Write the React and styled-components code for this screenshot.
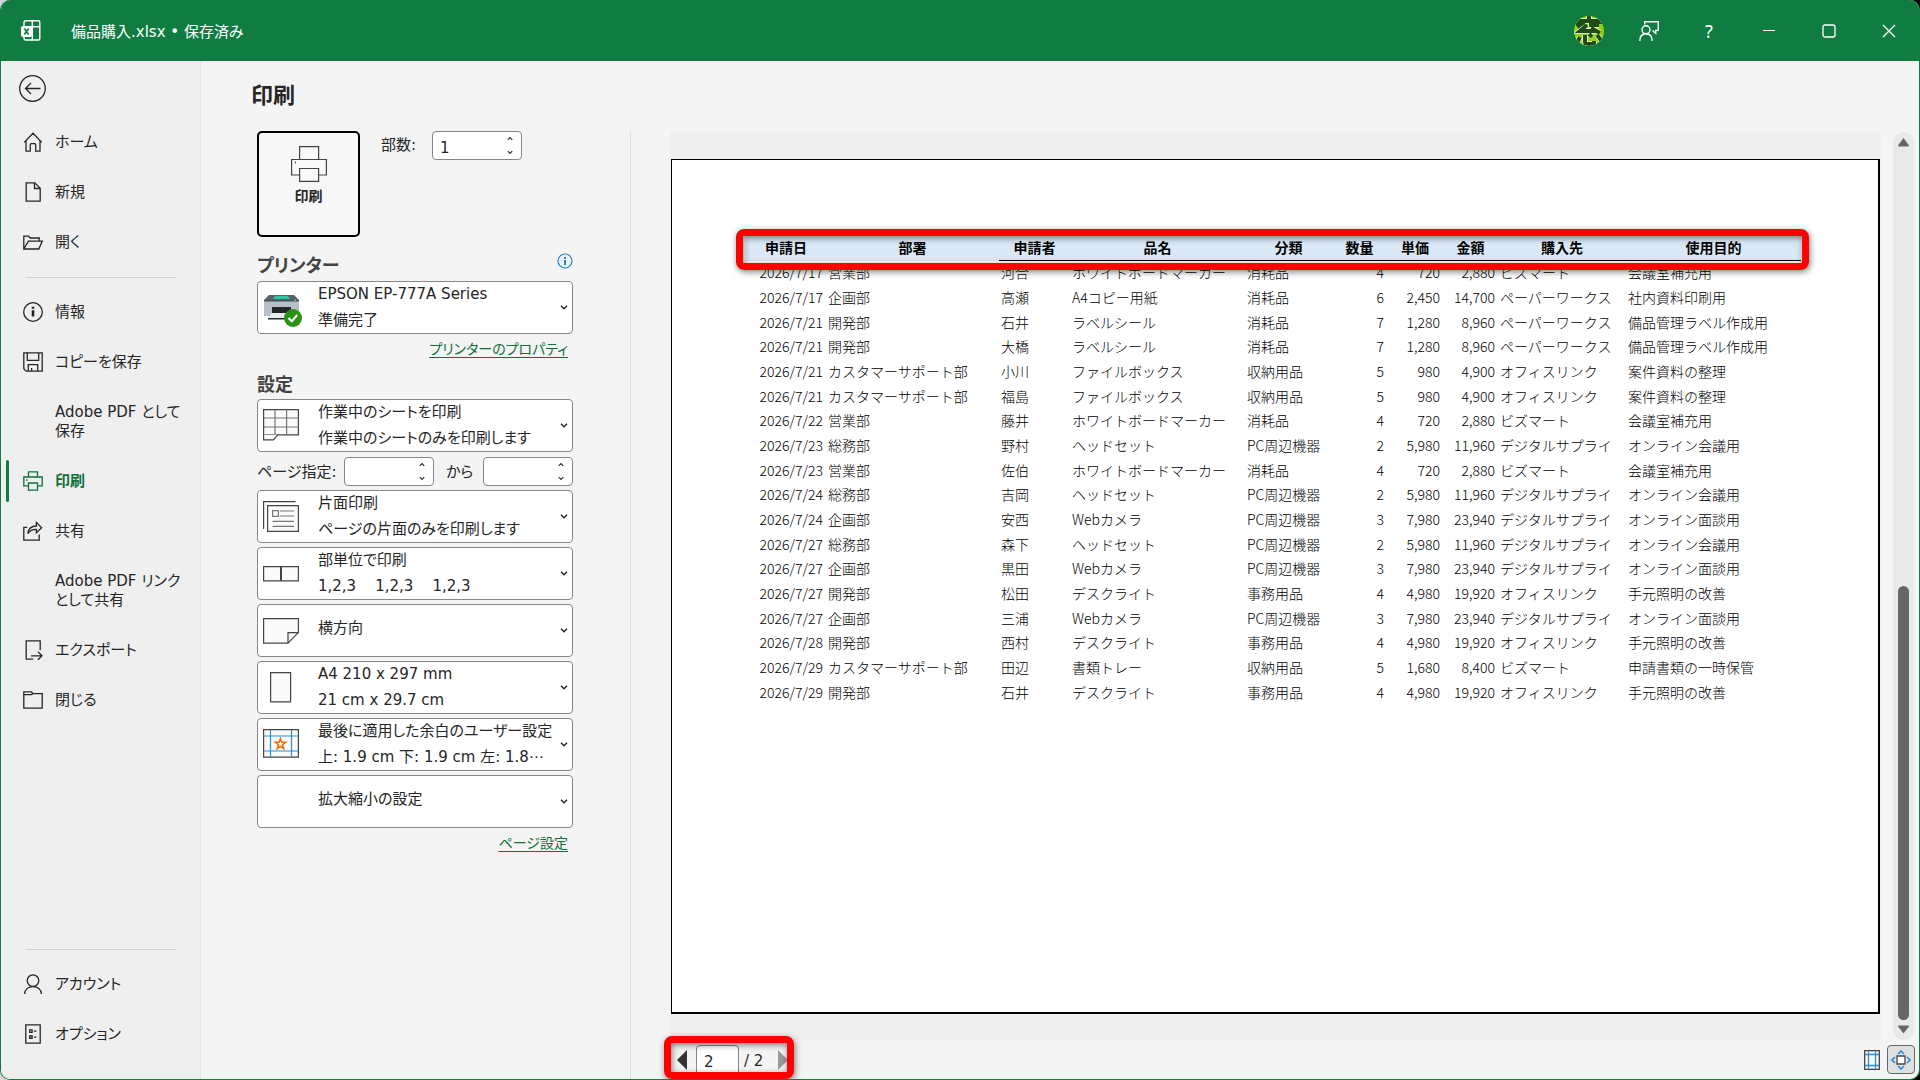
import React from 'react'
import styled, { createGlobalStyle } from 'styled-components'

const GlobalStyle = createGlobalStyle`
  *, *::before, *::after {
    box-sizing: border-box;
  }

  body {
    margin: 0;
    background: linear-gradient(90deg, #d6d6d6 50%, #000000 50%);
    color: #262626;
    font-family: 'DejaVu Sans', 'Noto Sans CJK JP', sans-serif;
    font-feature-settings: 'palt';
    font-size: 15px;
  }

  button, input, select {
    font: inherit;
    font-feature-settings: inherit;
    color: inherit;
  }

  svg {
    display: block;
    flex: none;
  }
`

const Window = styled.div`
  min-height: 100vh;
  display: flex;
  flex-direction: column;
  background: #f4f4f4;
  border: 1px solid #107c41;
  border-top: none;
  border-radius: 10px;
  overflow: hidden;
`

const TitleBar = styled.header`
  height: 61px;
  display: flex;
  align-items: center;
  gap: 30px;
  padding-left: 20px;
  background: #107c41;
  color: #ffffff;
`

const FileName = styled.div`
  flex: 1;
`

const TitleActions = styled.div`
  display: flex;
`

const TitleButton = styled.button`
  width: 60px;
  height: 61px;
  display: flex;
  align-items: center;
  justify-content: center;
  padding: 0;
  border: none;
  background: transparent;
  font-family: 'Noto Sans', sans-serif;
  font-size: 18px;
`

const Body = styled.div`
  flex: 1;
  display: flex;
`

const Sidebar = styled.nav`
  width: 200px;
  flex: none;
  display: flex;
  flex-direction: column;
  padding-bottom: 20px;
  background: #efefef;
  border-right: 1px solid #e6e6e6;
`

const BackButton = styled.button`
  width: 62px;
  height: 56px;
  padding: 0 0 2px 18px;
  border: none;
  background: transparent;
`

const NavItem = styled.a`
  height: ${props => (props.$tall ? 69 : 50)}px;
  display: flex;
  align-items: center;
  gap: 12px;
  padding: 0 10px 0 5px;
  color: ${props => (props.$active ? '#0f703b' : '#262626')};
  font-weight: ${props => (props.$active ? 700 : 400)};
  line-height: 19px;
  text-decoration: none;

  &::before {
    content: '';
    width: 3px;
    height: 42px;
    margin-right: -6px;
    border-radius: 2px;
    background: ${props => (props.$active ? '#107c41' : 'transparent')};
  }
`

const IconSlot = styled.span`
  width: 20px;
  flex: none;
  margin-left: 8px;
`

const NavDivider = styled.hr`
  width: 150px;
  margin: ${props => (props.$bottom ? 'auto 0 9px 25px' : '10px 0 9px 25px')};
  border: none;
  border-top: 1px solid #cfcfcf;
`

const Content = styled.main`
  flex: 1;
  min-width: 0;
  display: flex;
  flex-direction: column;
`

const PageTitle = styled.h1`
  margin: 0;
  padding-left: 50px;
  font-size: 22px;
  line-height: 70px;
`

const Columns = styled.div`
  flex: 1;
  display: flex;
`

const Settings = styled.section`
  width: 430px;
  flex: none;
  padding: 0 57px 0 56px;
  border-right: 1px solid #dfdfdf;
`

const PrintRow = styled.div`
  display: flex;
  align-items: flex-start;
`

const PrintButton = styled.button`
  width: 103px;
  height: 106px;
  display: flex;
  flex-direction: column;
  align-items: center;
  gap: 3px;
  margin-right: 21px;
  padding: 13px 0 0;
  border: 2px solid #000000;
  border-radius: 5px;
  background: #f7f7f7;
  font-size: 14px;
  font-weight: 700;
  line-height: 22px;
`

const FieldLabel = styled.label`
  width: ${props => props.$width}px;
  padding-left: ${props => props.$indent || 0}px;
  line-height: 28px;
  white-space: nowrap;
`

const SpinnerBox = styled.span`
  width: 90px;
  height: 29px;
  display: flex;
  border: 1px solid #868686;
  border-radius: 4px;
  background: #ffffff;
  overflow: hidden;
`

const SpinnerInput = styled.input`
  width: 67px;
  padding: 4px 0 0 7px;
  border: none;
  outline: none;
  background: transparent;
`

const SpinnerButtons = styled.span`
  display: flex;
  flex-direction: column;
`

const SpinnerButton = styled.button`
  width: 21px;
  flex: 1;
  display: flex;
  align-items: center;
  padding: 0 0 0 7px;
  border: none;
  background: transparent;
`

const SectionHead = styled.div`
  display: flex;
  align-items: center;
  justify-content: space-between;
  height: ${props => props.$height}px;
  padding-top: ${props => props.$top}px;
`

const SectionTitle = styled.h2`
  margin: 0;
  color: #444444;
  font-size: 18px;
  line-height: 24px;
`

const InfoButton = styled.button`
  padding: 0 0 10px;
  border: none;
  background: transparent;
`

const Dropdown = styled.div`
  height: 53px;
  display: flex;
  align-items: center;
  margin-bottom: 4px;
  padding-right: 4px;
  border: 1px solid #868686;
  border-radius: 4px;
  background: #ffffff;
`

const DropdownIcon = styled.span`
  width: 60px;
  padding-left: 5px;
`

const DropdownText = styled.div`
  flex: 1;
  min-width: 0;
  padding-bottom: ${props => (props.$single ? 6 : 1)}px;
  line-height: 26px;
  white-space: pre;
`

const Select = styled.select`
  appearance: none;
  display: block;
  width: 100%;
  height: 26px;
  padding: 0;
  border: none;
  outline: none;
  background: transparent;
  line-height: 26px;
`

const PageRange = styled.div`
  display: flex;
  align-items: center;
  margin: 5px 0 4px;
`

const LinkRow = styled.div`
  padding-right: 5px;
  font-size: 14px;
  line-height: 22px;
  text-align: right;
`

const GreenLink = styled.a`
  color: #0f703b;
  text-underline-offset: 3px;
`

const Preview = styled.section`
  flex: 1;
  min-width: 0;
  display: flex;
  flex-direction: column;
  padding: 1px 4px 0 39px;
`

const Stage = styled.div`
  flex: 1;
  display: flex;
  gap: 12px;
  padding-right: 1px;
`

const Canvas = styled.div`
  flex: 1;
  min-width: 0;
  display: flex;
  padding: 27px 1px 26px;
  background: #efefef;
`

const Paper = styled.div`
  flex: 1;
  min-width: 0;
  padding: 75px 77px 0 74px;
  border: solid #000000;
  border-width: 1px 2px 2px 1px;
  background: #ffffff;
`

const TableWrap = styled.div`
  position: relative;
`

const Sheet = styled.table`
  width: 100%;
  height: 470px;
  table-layout: fixed;
  border-spacing: 0;
  color: #000000;
  font-family: 'Noto Sans CJK JP', sans-serif;
  font-feature-settings: normal;
  font-size: 14px;
  font-weight: 300;
  line-height: 20px;
  white-space: nowrap;
`

const HeadCell = styled.th`
  height: 26px;
  padding: 0 0 2px;
  border-bottom: 1px solid ${props => (props.$ruled ? '#000000' : '#dae8f6')};
  background: #dae8f6;
`

const Cell = styled.td`
  padding: 0 3px 2px 2px;
  text-align: ${props => props.$align || 'left'};
`

const Highlight = styled.div`
  position: absolute;
  top: ${props => props.$top}px;
  left: ${props => props.$left}px;
  right: ${props => props.$right}px;
  height: ${props => props.$height}px;
  border: 7px solid #ff0000;
  border-radius: 8px;
  box-shadow: 1px 2px 6px rgba(0, 0, 0, 0.5), inset 1px 2px 6px rgba(0, 0, 0, 0.5);
  pointer-events: none;
`

const Scrollbar = styled.div`
  width: 21px;
  display: flex;
  flex-direction: column;
  align-items: center;
  padding: 6px 0;
  border-radius: 11px;
  background: #e9e9e9;
`

const ScrollTrack = styled.div`
  flex: 1;
  width: 11px;
  display: flex;
  flex-direction: column;
  justify-content: flex-end;
  padding: 4px 0 5px;
`

const ScrollThumb = styled.div`
  height: 50%;
  border-radius: 6px;
  background: #666666;
`

const PreviewFooter = styled.div`
  height: 39px;
  display: flex;
  justify-content: space-between;
  padding: 5px 0 0;
`

const Pager = styled.div`
  position: relative;
  width: 120px;
  height: 34px;
  display: flex;
  align-items: flex-start;
  gap: 5px;
  padding-left: 7px;
  line-height: 32px;
`

const PagerButton = styled.button`
  padding: 5px 0 0;
  border: none;
  background: transparent;
`

const PagerInput = styled.input`
  width: 43px;
  height: 32px;
  margin-left: 4px;
  padding: 2px 0 0 7px;
  border: 1px solid #868686;
  border-radius: 4px;
  background: #ffffff;
`

const PagerTotal = styled.span`
  width: 29px;
`

const ViewButtons = styled.div`
  display: flex;
  gap: 1px;
`

const ViewButton = styled.button`
  width: 28px;
  height: 29px;
  display: flex;
  align-items: center;
  justify-content: center;
  padding: 0;
  border: 1px solid ${props => (props.$on ? '#666666' : 'transparent')};
  border-radius: 4px;
  background: ${props => (props.$on ? '#e0e0e0' : 'transparent')};
`

const Icon = ({ size = 20, children }) => (
  <svg width={size} height={size} viewBox={`0 0 ${size} ${size}`} fill="none" stroke="currentColor" strokeWidth="1.3">
    {children}
  </svg>
)

const navIcons = {
  home: <path d="M1.2 10.4 10 1.2l8.8 9.2M3 8.8v10.3h4.3v-6.4q0-1 1-1h3.4q1 0 1 1v6.4H17V8.8M7.3 19.1h.2" />,
  blank: <path d="M3.2.8h8.6l5.4 5.4v13H3.2zM11.5 1v5.5H17" />,
  open: <path d="M.8 17V4.2h4.7l1.8 1.8h8.9v3.2M.8 17l4.6-7.8h13.8L15.8 17z" />,
  info: (
    <>
      <circle cx="10" cy="10" r="9.3" />
      <path d="M10 8.3v6.2M10 4.8v2" strokeWidth="2.6" />
    </>
  ),
  save: <path d="M.8.8h18.4v18.4H3.2L.8 16.8zM4.3 1v7.4h11.4V1M5.3 19v-6.3h9.4V19M8.6 19v-3" />,
  print: (
    <>
      <path d="M5.5 6V.9h9V6M5.2 14.8H.8V6h18.4v8.8h-4.4M5.5 12h9v7.1h-9z" />
      <path d="M3 9h1.5" />
    </>
  ),
  share: <path d="M4.3 6.3H.8v12.9h15.4v-5.8M4.8 12.5C5.5 7.6 8.5 5 13.4 5V1.4l5.2 5.3-5.2 5V8.4C9.6 8.3 7 9.5 4.8 12.5z" />,
  export: <path d="M10.3 19.2H3.2V.8h14V10M8 15.8h11M14.8 11.6l4.2 4.2-4.2 4.2" />,
  close: <path d="M.8 18.2V1.8h7.8l1.2 1.8h9.4v14.6zM.8 4.6h7.6l1.4-1" />,
  account: (
    <>
      <circle cx="10" cy="6.6" r="5.8" />
      <path d="M1.5 20c.5-4.5 4-7.4 8.5-7.4s8 2.9 8.5 7.4" />
    </>
  ),
  options: (
    <>
      <path d="M2.8.8h14.4v18.4H2.8z" />
      <path d="M6.7 5.9h2.4v2.4H6.7zM6.7 12h2.4v2.4H6.7zM11 7.1h2.4M11 13.2h2.4" />
    </>
  )
}

const mainNav = [
  { icon: 'home', label: 'ホーム' },
  { icon: 'blank', label: '新規' },
  { icon: 'open', label: '開く' },
  { divider: true },
  { icon: 'info', label: '情報' },
  { icon: 'save', label: 'コピーを保存' },
  { label: <>Adobe PDF として<br />保存</>, tall: true },
  { icon: 'print', label: '印刷', active: true },
  { icon: 'share', label: '共有' },
  { label: <>Adobe PDF リンク<br />として共有</>, tall: true },
  { icon: 'export', label: 'エクスポート' },
  { icon: 'close', label: '閉じる' }
]

const footerNav = [
  { icon: 'account', label: 'アカウント' },
  { icon: 'options', label: 'オプション' }
]

const NavLink = ({ item }) => (
  <NavItem href="#" $tall={item.tall} $active={item.active} aria-current={item.active ? 'page' : undefined}>
    <IconSlot>{item.icon && <Icon>{navIcons[item.icon]}</Icon>}</IconSlot>
    <span>{item.label}</span>
  </NavItem>
)

const ExcelLogo = () => (
  <svg width="20" height="21" viewBox="0 0 20 21" fill="none" stroke="#fff" strokeWidth="1.4">
    <path d="M3 6V2.7q0-2 2-2h12.3q1.5 0 1.5 1.5v16.3q0 1.5-1.5 1.5H5q-2 0-2-2V17M3 6.8h16M11.3 1v19" />
    <rect x="0" y="6" width="11" height="11" rx="2" fill="#fff" stroke="none" />
    <path d="m3.3 8.6 4.4 6M7.7 8.6l-4.4 6" stroke="#107c41" strokeWidth="1.7" />
  </svg>
)

const Avatar = () => (
  <svg width="30" height="30" viewBox="0 0 30 30" fill="none">
    <clipPath id="avatar"><circle cx="15" cy="15" r="15" /></clipPath>
    <g clipPath="url(#avatar)">
      <rect width="30" height="30" fill="#8fd014" />
      {['#f2f7e6', '#1f4d16'].map((color, i) => (
        <path
          key={color}
          d="M15 0v4M3 9V5h23v3M10 6 3 11M17 6v3h8M13 9l-7 6h15M17 12l9 5M6 21l-3 6M11 19v7q0 2 3 2h6v-3M15 18l3 3M23 19l4 5"
          stroke={color}
          strokeWidth={i === 0 ? 5.6 : 4}
        />
      ))}
    </g>
  </svg>
)

const FeedbackIcon = () => (
  <svg width="20" height="20" viewBox="0 0 20 20" fill="none" stroke="#fff" strokeWidth="1.4">
    <path d="M5.7 3.5V.8h13.5v8.6h-2.4v3l-3.3-3" />
    <circle cx="7" cy="8.8" r="4" />
    <path d="M.8 20c0-4.5 2.5-7.2 6.2-7.2s6.2 2.7 6.2 7.2" />
  </svg>
)

const Chevron = ({ up, size = 8 }) => (
  <svg width={size} height="5" viewBox="0 0 8 5" fill="none" stroke="#262626" strokeWidth="1.5">
    <path d={up ? 'M1 4.2 4 1.2l3 3' : 'M1 .8l3 3 3-3'} />
  </svg>
)

const BigPrinterIcon = () => (
  <svg width="36" height="36" viewBox="0 0 36 36" fill="#fafafa" stroke="#444" strokeWidth="1.2">
    <path d="M8.6 14V.6h19V14M8.6 29H.6V13.5h34.8V29h-8M8.6 22.5h19v12.9h-19z" />
    <path d="M4 16.5h1" strokeWidth="2" />
  </svg>
)

const PrinterPhoto = () => (
  <svg width="40" height="40" viewBox="0 -6 40 40">
    <path d="M6 1h25l5 5v2H1V6z" fill="#58626b" />
    <path d="M12 2h13l2 3H10z" fill="#25c7a5" />
    <path d="M1 7h35v15H1z" fill="#b7c0ca" />
    <path d="M1 6h35v1.5H1z" fill="#46505a" />
    <path d="M9 13h19v7H9z" fill="#23272c" />
    <path d="M9 19h16v5H5z" fill="#e8ecf0" />
    <path d="M5 24h20v1.5H5z" fill="#23272c" />
    <path d="M31 5.5h2v1.5h-2z" fill="#2be04a" />
    <circle cx="30" cy="24" r="9" fill="#2c9113" />
    <path d="m25.5 24 3.3 3.2 5.4-6.2" fill="none" stroke="#fff" strokeWidth="2" />
  </svg>
)

const SheetIcon = () => (
  <svg width="36" height="36" viewBox="0 0 36 36" fill="#fafafa" stroke="#444" strokeWidth="1.2">
    <path d="M.6 1.6h34.8v25.2H.6z" />
    <path d="M.6 10h34.8M.6 19h34.8M12 1.6v25M23.6 1.6v25" stroke="#777" />
    <path d="M.6 26.8v5h9.8l4.4-5" />
  </svg>
)

const OneSidedIcon = () => (
  <svg width="36" height="32" viewBox="0 0 36 32" fill="#fafafa" stroke="#444" strokeWidth="1.2">
    <path d="M.6 28V.6h32" fill="none" />
    <path d="M4.6 4.6h30.8v25.8H4.6z" />
    <path d="M9.6 9.6h5.8v5.8H9.6zM17 10h14M17 15h14M9.6 20.3H31M9.6 25.3H31" stroke="#777" />
  </svg>
)

const CollateIcon = () => (
  <svg width="36" height="16" viewBox="0 0 36 16" fill="#fafafa" stroke="#444" strokeWidth="1.2">
    <path d="M.6.6h34.8v14.2H.6z" />
    <path d="M18 .6v14.2" strokeWidth="2" />
  </svg>
)

const LandscapeIcon = () => (
  <svg width="36" height="26" viewBox="0 0 36 26" fill="#fafafa" stroke="#444" strokeWidth="1.2">
    <path d="M.6.6h34.8V14.6L25 25.2H.6zM25 25V14.6h10.4" />
  </svg>
)

const PortraitPaperIcon = () => (
  <svg width="36" height="31" viewBox="0 0 36 31" fill="#fafafa" stroke="#444" strokeWidth="1.2">
    <path d="M7.6.6h20v29.2h-20z" />
  </svg>
)

const MarginsIcon = () => (
  <svg width="36" height="31" viewBox="0 0 36 31" fill="#fafafa" stroke="#444" strokeWidth="1.2">
    <path d="M.6.6h34.8v27.6H.6z" />
    <path d="M7.5 1v27M28.5 1v27M1 7h34M1 22h34" stroke="#2b8fd4" />
    <path d="m17.5 9.6 1.3 3.7h3.8l-3 2.4 1.1 3.9-3.2-2.3-3.2 2.3 1.1-3.9-3-2.4h3.8z" stroke="#e8730c" strokeWidth="1.6" />
  </svg>
)

const Spinner = ({ id, value = '' }) => (
  <SpinnerBox>
    <SpinnerInput id={id} type="text" inputMode="numeric" defaultValue={value} />
    <SpinnerButtons>
      <SpinnerButton type="button" aria-label="増やす"><Chevron up size={6} /></SpinnerButton>
      <SpinnerButton type="button" aria-label="減らす"><Chevron size={6} /></SpinnerButton>
    </SpinnerButtons>
  </SpinnerBox>
)

const Option = ({ name, icon, title, detail }) => (
  <Dropdown>
    <DropdownIcon>{icon}</DropdownIcon>
    <DropdownText $single={!detail}>
      <Select aria-label={name}>
        <option>{title}</option>
      </Select>
      {detail}
    </DropdownText>
    <Chevron />
  </Dropdown>
)

const pageOptions = [
  { name: '印刷面', icon: <OneSidedIcon />, title: '片面印刷', detail: 'ページの片面のみを印刷します' },
  { name: '印刷単位', icon: <CollateIcon />, title: '部単位で印刷', detail: '1,2,3    1,2,3    1,2,3' },
  { name: '印刷の向き', icon: <LandscapeIcon />, title: '横方向' },
  { name: '用紙サイズ', icon: <PortraitPaperIcon />, title: 'A4 210 x 297 mm', detail: '21 cm x 29.7 cm' },
  { name: '余白', icon: <MarginsIcon />, title: '最後に適用した余白のユーザー設定', detail: '上: 1.9 cm 下: 1.9 cm 左: 1.8⋯' },
  { name: '拡大縮小', icon: null, title: '拡大縮小の設定' }
]

const columns = [
  { title: '申請日', width: 80, align: 'right' },
  { title: '部署', width: 173 },
  { title: '申請者', width: 71 },
  { title: '品名', width: 175 },
  { title: '分類', width: 87 },
  { title: '数量', width: 55, align: 'right' },
  { title: '単価', width: 56, align: 'right' },
  { title: '金額', width: 55, align: 'right' },
  { title: '購入先', width: 128 },
  { title: '使用目的', width: 175 }
]

// item name -> class, quantity, unit price, amount, vendor, purpose
const items = {
  'ホワイトボードマーカー': ['消耗品', '4', '720', '2,880', 'ビズマート', '会議室補充用'],
  'A4コピー用紙': ['消耗品', '6', '2,450', '14,700', 'ペーパーワークス', '社内資料印刷用'],
  'ラベルシール': ['消耗品', '7', '1,280', '8,960', 'ペーパーワークス', '備品管理ラベル作成用'],
  'ファイルボックス': ['収納用品', '5', '980', '4,900', 'オフィスリンク', '案件資料の整理'],
  'ヘッドセット': ['PC周辺機器', '2', '5,980', '11,960', 'デジタルサプライ', 'オンライン会議用'],
  'Webカメラ': ['PC周辺機器', '3', '7,980', '23,940', 'デジタルサプライ', 'オンライン面談用'],
  'デスクライト': ['事務用品', '4', '4,980', '19,920', 'オフィスリンク', '手元照明の改善'],
  '書類トレー': ['収納用品', '5', '1,680', '8,400', 'ビズマート', '申請書類の一時保管']
}

const requests = [
  ['2026/7/17', '営業部', '河合', 'ホワイトボードマーカー'],
  ['2026/7/17', '企画部', '高瀬', 'A4コピー用紙'],
  ['2026/7/21', '開発部', '石井', 'ラベルシール'],
  ['2026/7/21', '開発部', '大橋', 'ラベルシール'],
  ['2026/7/21', 'カスタマーサポート部', '小川', 'ファイルボックス'],
  ['2026/7/21', 'カスタマーサポート部', '福島', 'ファイルボックス'],
  ['2026/7/22', '営業部', '藤井', 'ホワイトボードマーカー'],
  ['2026/7/23', '総務部', '野村', 'ヘッドセット'],
  ['2026/7/23', '営業部', '佐伯', 'ホワイトボードマーカー'],
  ['2026/7/24', '総務部', '吉岡', 'ヘッドセット'],
  ['2026/7/24', '企画部', '安西', 'Webカメラ'],
  ['2026/7/27', '総務部', '森下', 'ヘッドセット'],
  ['2026/7/27', '企画部', '黒田', 'Webカメラ'],
  ['2026/7/27', '開発部', '松田', 'デスクライト'],
  ['2026/7/27', '企画部', '三浦', 'Webカメラ'],
  ['2026/7/28', '開発部', '西村', 'デスクライト'],
  ['2026/7/29', 'カスタマーサポート部', '田辺', '書類トレー'],
  ['2026/7/29', '開発部', '石井', 'デスクライト']
]

const SheetTable = () => (
  <Sheet>
    <colgroup>
      {columns.map(column => <col key={column.title} width={column.width} />)}
    </colgroup>
    <thead>
      <tr>
        {columns.map((column, i) => (
          <HeadCell key={column.title} scope="col" $ruled={i > 1}>{column.title}</HeadCell>
        ))}
      </tr>
    </thead>
    <tbody>
      {requests.map((request, row) => (
        <tr key={row}>
          {[...request, ...items[request[3]]].map((value, i) => (
            <Cell key={i} $align={columns[i].align}>{value}</Cell>
          ))}
        </tr>
      ))}
    </tbody>
  </Sheet>
)

const App = () => (
  <>
    <GlobalStyle />
    <Window>
      <TitleBar>
        <ExcelLogo />
        <FileName>備品購入.xlsx • 保存済み</FileName>
        <TitleActions>
          <TitleButton aria-label="アカウント"><Avatar /></TitleButton>
          <TitleButton aria-label="フィードバック"><FeedbackIcon /></TitleButton>
          <TitleButton aria-label="ヘルプ">?</TitleButton>
          <TitleButton aria-label="最小化">
            <svg width="14" height="14" fill="none" stroke="#fff"><path d="M1 6.5h12" /></svg>
          </TitleButton>
          <TitleButton aria-label="最大化">
            <svg width="14" height="14" fill="none" stroke="#fff" strokeWidth="1.3">
              <rect x="1" y="1" width="12" height="12" rx="2" />
            </svg>
          </TitleButton>
          <TitleButton aria-label="閉じる">
            <svg width="14" height="14" fill="none" stroke="#fff" strokeWidth="1.3">
              <path d="m1 1 12 12M13 1 1 13" />
            </svg>
          </TitleButton>
        </TitleActions>
      </TitleBar>

      <Body>
        <Sidebar>
          <BackButton aria-label="戻る">
            <svg width="27" height="27" viewBox="0 0 27 27" fill="none" stroke="#262626" strokeWidth="1.3">
              <circle cx="13.5" cy="13.5" r="12.8" />
              <path d="M21.5 13.5h-15M12 8l-5.5 5.5L12 19" />
            </svg>
          </BackButton>
          {mainNav.map((item, i) => (
            item.divider ? <NavDivider key={i} /> : <NavLink key={i} item={item} />
          ))}
          <NavDivider $bottom />
          {footerNav.map(item => <NavLink key={item.icon} item={item} />)}
        </Sidebar>

        <Content>
          <PageTitle>印刷</PageTitle>
          <Columns>
            <Settings>
              <PrintRow>
                <PrintButton>
                  <BigPrinterIcon />
                  印刷
                </PrintButton>
                <FieldLabel htmlFor="copies" $width={51}>部数:</FieldLabel>
                <Spinner id="copies" value="1" />
              </PrintRow>

              <SectionHead $height={44} $top={14}>
                <SectionTitle>プリンター</SectionTitle>
                <InfoButton aria-label="プリンターの状態">
                  <svg width="16" height="16" fill="none" stroke="#1a86d0" strokeWidth="1.2">
                    <circle cx="8" cy="8" r="7" />
                    <path d="M8 7v5M8 4v2" strokeWidth="2" />
                  </svg>
                </InfoButton>
              </SectionHead>
              <Option name="プリンター" icon={<PrinterPhoto />} title="EPSON EP-777A Series" detail="準備完了" />
              <LinkRow><GreenLink href="#">プリンターのプロパティ</GreenLink></LinkRow>

              <SectionHead $height={39} $top={10}>
                <SectionTitle>設定</SectionTitle>
              </SectionHead>
              <Option name="印刷対象" icon={<SheetIcon />} title="作業中のシートを印刷" detail="作業中のシートのみを印刷します" />
              <PageRange>
                <FieldLabel htmlFor="from" $width={87}>ページ指定:</FieldLabel>
                <Spinner id="from" />
                <FieldLabel htmlFor="to" $width={49} $indent={12}>から</FieldLabel>
                <Spinner id="to" />
              </PageRange>
              {pageOptions.map(option => <Option key={option.name} {...option} />)}
              <LinkRow><GreenLink href="#">ページ設定</GreenLink></LinkRow>
            </Settings>

            <Preview>
              <Stage>
                <Canvas>
                  <Paper>
                    <TableWrap>
                      <SheetTable />
                      <Highlight $top={-6} $left={-10} $right={-8} $height={41} />
                    </TableWrap>
                  </Paper>
                </Canvas>
                <Scrollbar>
                  <svg width="11" height="9" fill="#666"><path d="M5.5 0 11 7.5q0 1-1 1H1q-1 0-1-1z" /></svg>
                  <ScrollTrack><ScrollThumb /></ScrollTrack>
                  <svg width="11" height="9" fill="#666"><path d="M5.5 8.5 0 1.5q0-1 1-1h9q1 0 1 1z" /></svg>
                </Scrollbar>
              </Stage>
              <PreviewFooter>
                <Pager>
                  <PagerButton aria-label="前のページ">
                    <svg width="10" height="20" fill="#333"><path d="M10 0v20L0 10z" /></svg>
                  </PagerButton>
                  <PagerInput aria-label="ページ" type="text" defaultValue="2" />
                  <PagerTotal>/ 2</PagerTotal>
                  <PagerButton aria-label="次のページ" disabled>
                    <svg width="10" height="20" fill="#999"><path d="M0 0v20l10-10z" /></svg>
                  </PagerButton>
                  <Highlight $top={-9} $left={-6} $right={-4} $height={43} />
                </Pager>
                <ViewButtons>
                  <ViewButton aria-label="余白の表示">
                    <svg width="16" height="20" fill="#fafafa" stroke="#444" strokeWidth="1.3">
                      <path d="M.7.7h14.6v18.6H.7z" />
                      <path d="M4.5 1v18M11.5 1v18M1 4.5h14M1 15.5h14" stroke="#2b8fd4" />
                    </svg>
                  </ViewButton>
                  <ViewButton aria-label="ページに合わせる" $on>
                    <svg width="20" height="20" fill="none" stroke="#2b8fd4" strokeWidth="1.7">
                      <path d="M6 6h8v8H6z" fill="#fff" stroke="#444" strokeWidth="1.3" />
                      <path d="m7 4 3-3 3 3M7 16l3 3 3-3M4 7l-3 3 3 3M16 7l3 3-3 3" />
                    </svg>
                  </ViewButton>
                </ViewButtons>
              </PreviewFooter>
            </Preview>
          </Columns>
        </Content>
      </Body>
    </Window>
  </>
)

export default App
